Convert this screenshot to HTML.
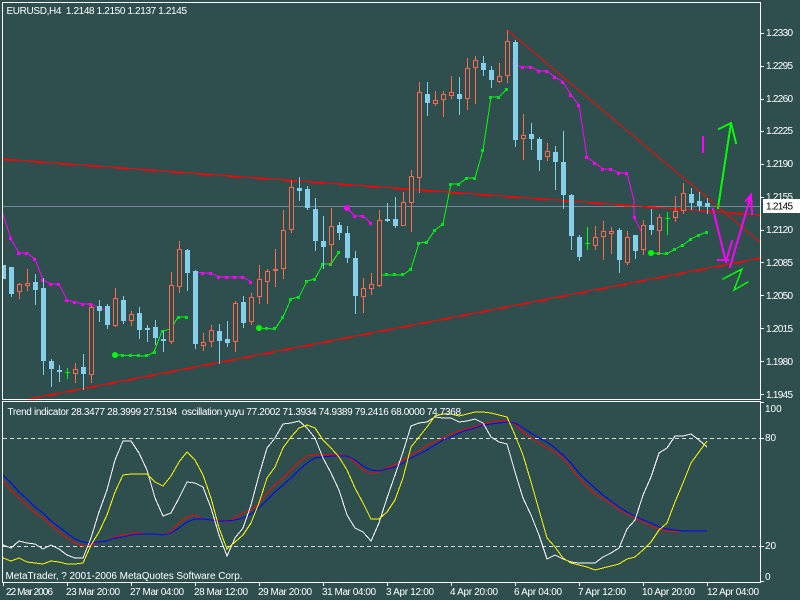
<!DOCTYPE html>
<html><head><meta charset="utf-8"><style>
html,body{margin:0;padding:0;background:#2f4f4f;width:800px;height:600px;overflow:hidden}
svg{display:block}
text{font-family:"Liberation Sans",sans-serif;font-size:10px;fill:#fff}
</style></head><body>
<svg width="800" height="600" viewBox="0 0 800 600" xmlns="http://www.w3.org/2000/svg">
<rect width="800" height="600" fill="#2f4f4f"/>
<g shape-rendering="crispEdges">
<path d="M3 206.5H760" stroke="#778899" fill="none"/>
<!-- indicator lines -->
<g fill="none" stroke="#ff00ff">
<polyline points="3,214 11,239 19,253 27,253 35,259 43,280 51,284 59,284 67,300 75,302 83,304 91,304 99,308 106,310"/>
<polyline points="195,272 203,273 211,273 219,277 227,277 235,277 243,277 251,282"/>
<polyline points="347,208 355,216 363,216 371,223"/>
<polyline points="512,64 523,67 531,67 539,71 547,71 555,77 563,82 571,95 579,105 587,157 595,163 603,169 611,169 619,173 627,173 630,185 634,200 634,217 641,231"/>
</g>
<path fill="#ff00ff" d="M9 237h3v3h-3zM17 252h3v3h-3zM25 252h3v3h-3zM33 258h3v3h-3zM41 279h3v3h-3zM49 283h3v3h-3zM57 283h3v3h-3zM65 299h3v3h-3zM73 301h3v3h-3zM81 303h3v3h-3zM89 303h3v3h-3z
M201 272h3v3h-3zM209 272h3v3h-3zM217 276h3v3h-3zM225 276h3v3h-3zM233 276h3v3h-3zM241 276h3v3h-3zM249 281h3v3h-3z
M353 215h3v3h-3zM361 215h3v3h-3zM369 222h3v3h-3z
M521 66h3v3h-3zM529 66h3v3h-3zM537 70h3v3h-3zM545 70h3v3h-3zM553 76h3v3h-3zM561 81h3v3h-3zM569 94h3v3h-3zM577 104h3v3h-3zM585 156h3v3h-3zM593 162h3v3h-3zM601 168h3v3h-3zM609 168h3v3h-3zM617 172h3v3h-3zM625 172h3v3h-3zM633 216h3v3h-3z"/>
<g fill="none" stroke="#00ff00">
<polyline points="115,355 147,356 154,352 162,331 171,329 178,317 186,317"/>
<polyline points="259,328 275,329 283,317 291,299 299,297 307,281 315,279 323,264 331,264 339,252"/>
<polyline points="379,275 403,275 411,269 419,243 427,242 435,230 443,224 451,184 459,184 467,178 475,178 483,150 491,97 499,97 507,89"/>
<polyline points="651,253 667,254 675,249 683,245 691,239 699,235 707,232"/>
</g>
<path fill="#00e020" d="M121 354h3v3h-3zM129 354h3v3h-3zM137 354h3v3h-3zM145 354h3v3h-3zM153 351h3v3h-3zM161 330h3v3h-3zM177 316h3v3h-3zM185 316h3v3h-3z
M265 327h3v3h-3zM273 327h3v3h-3zM281 316h3v3h-3zM289 298h3v3h-3zM297 296h3v3h-3zM305 280h3v3h-3zM313 278h3v3h-3zM321 263h3v3h-3zM329 263h3v3h-3zM337 251h3v3h-3z
M385 273h3v3h-3zM393 273h3v3h-3zM401 273h3v3h-3zM409 268h3v3h-3zM417 242h3v3h-3zM425 241h3v3h-3zM433 229h3v3h-3zM441 223h3v3h-3zM449 183h3v3h-3zM457 183h3v3h-3zM465 177h3v3h-3zM473 177h3v3h-3zM481 149h3v3h-3zM489 96h3v3h-3zM497 96h3v3h-3zM505 88h3v3h-3z
M657 252h3v3h-3zM665 252h3v3h-3zM673 248h3v3h-3zM681 244h3v3h-3zM689 238h3v3h-3zM697 234h3v3h-3zM705 231h3v3h-3z"/>
</g>
<circle cx="347" cy="208" r="3" fill="#ff00ff"/>
<circle cx="115" cy="355" r="3" fill="#00ff00"/>
<circle cx="259" cy="328" r="3" fill="#00ff00"/>
<circle cx="651" cy="253" r="3" fill="#00ff00"/>
<!-- trend lines -->
<g fill="none" stroke="#ff0000" shape-rendering="crispEdges">
<path d="M3 159L760 215"/>
<path d="M3 159.5L760 215.5" stroke-width="1.6" stroke-dasharray="14 14"/>
<path d="M28 399L760 258"/>
<path d="M28 399.5L760 258.500" stroke-width="1.6" stroke-dasharray="10 10"/>
<path d="M507 30L760 242"/>
</g>
<!-- candles -->
<g shape-rendering="crispEdges" fill="none">
<path stroke="#87ceeb" d="M3.5 265V279M11.5 267V297M35.5 274V305M43.5 278V375M51.5 359V387M59.5 365V382M83.5 354V390M99.5 300V322M107.5 304V329M123.5 296V324M139.5 307V339M147.5 325V342M155.5 320V345M163.5 331V352M187.5 249V291M195.5 270V349M219.5 324V364M227.5 321V347M243.5 296V328M299.5 177V201M307.5 186V210M315.5 198V251M323.5 216V269M339.5 222V240M347.5 226V263M355.5 251V314M387.5 203V222M395.5 197V228M427.5 82V116M459.5 77V115M483.5 56V76M491.5 66V88M515.5 40V147M531.5 123V150M539.5 137V171M555.5 146V190M563.5 131V209M571.5 194V250M579.5 235V261M619.5 228V273M635.5 235V259M651.5 209V235M691.5 188V210M699.5 192V211M707.5 198V214"/>
<path fill="#87ceeb" d="M3 265h3v14h-3zM9 267h5v27h-5zM33 282h5v8h-5zM41 288h5v73h-5zM49 361h5v8h-5zM57 370h5v2h-5zM81 367h5v7h-5zM97 306h5v5h-5zM105 306h5v19h-5zM121 300h5v21h-5zM137 313h5v17h-5zM145 328h5v2h-5zM153 327h5v11h-5zM161 339h5v2h-5zM185 250h5v23h-5zM193 271h5v73h-5zM217 331h5v10h-5zM225 339h5v4h-5zM241 302h5v21h-5zM297 188h5v3h-5zM305 189h5v19h-5zM313 209h5v32h-5zM321 241h5v6h-5zM337 225h5v8h-5zM345 233h5v25h-5zM353 258h5v38h-5zM385 219h5v2h-5zM393 219h5v7h-5zM425 94h5v9h-5zM457 94h5v5h-5zM481 63h5v7h-5zM489 70h5v10h-5zM513 42h5v98h-5zM529 134h5v5h-5zM537 139h5v21h-5zM553 152h5v10h-5zM561 162h5v33h-5zM569 195h5v41h-5zM577 237h5v20h-5zM617 230h5v30h-5zM633 235h5v16h-5zM649 225h5v5h-5zM689 194h5v9h-5zM697 201h5v5h-5zM705 203h5v4h-5z"/>
<path stroke="#ff6a50" d="M19.5 283V299M27.5 269V291M75.5 363V383M91.5 305V383M115.5 288V327M131.5 311V326M171.5 272V344M179.5 241V293M203.5 333V351M211.5 325V347M235.5 301V352M251.5 293V325M259.5 265V304M267.5 269V304M275.5 249V287M283.5 210V279M291.5 180V233M331.5 208V266M363.5 278V313M371.5 273V295M379.5 210V287M403.5 192V226M411.5 170V232M419.5 82V193M435.5 91V106M443.5 91V117M451.5 76V99M467.5 58V110M475.5 56V104M499.5 63V83M507.5 30V83M523.5 114V160M547.5 143V161M595.5 226V250M603.5 221V260M611.5 227V254M627.5 231V265M643.5 220V255M659.5 214V255M675.5 196V222M683.5 183V214"/>
<path stroke="#ff6a50" fill="#2f4f4f" d="M17.5 284.5h4v7h-4zM25.5 283.5h4v2h-4zM73.5 369.5h4v4h-4zM89.5 307.5h4v67h-4zM113.5 298.5h4v27h-4zM129.5 314.5h4v6h-4zM169.5 285.5h4v56h-4zM177.5 249.5h4v37h-4zM201.5 342.5h4v3h-4zM209.5 330.5h4v11h-4zM233.5 303.5h4v38h-4zM249.5 297.5h4v24h-4zM257.5 279.5h4v17h-4zM265.5 271.5h4v10h-4zM273.5 269.5h4v1h-4zM281.5 230.5h4v38h-4zM289.5 187.5h4v42h-4zM329.5 226.5h4v18h-4zM361.5 288.5h4v8h-4zM369.5 284.5h4v4h-4zM377.5 220.5h4v65h-4zM401.5 202.5h4v23h-4zM409.5 176.5h4v26h-4zM417.5 92.5h4v85h-4zM433.5 100.5h4v3h-4zM441.5 94.5h4v5h-4zM449.5 92.5h4v3h-4zM465.5 68.5h4v30h-4zM473.5 60.5h4v7h-4zM497.5 76.5h4v5h-4zM505.5 41.5h4v34h-4zM521.5 135.5h4v3h-4zM545.5 151.5h4v5h-4zM593.5 237.5h4v8h-4zM601.5 231.5h4v5h-4zM609.5 231.5h4v2h-4zM625.5 237.5h4v25h-4zM641.5 225.5h4v24h-4zM657.5 217.5h4v13h-4zM673.5 211.5h4v6h-4zM681.5 193.5h4v17h-4z"/>
<path stroke="#00ff00" d="M67.5 368V379M65 372.5H70M587.5 227V250M585 243.5H590M667.5 212V235M665 218.5H670"/>
</g>
<!-- hand-drawn -->
<g fill="none" stroke-linecap="square" stroke-linejoin="miter" shape-rendering="crispEdges">
<path d="M703 137V152" stroke="#ff00ff" stroke-width="2"/>
<g stroke="#00ff00" stroke-width="2">
<path d="M718 208L731 123M719 129L731 123L736 143"/>
</g>
<g stroke="#00ff00" stroke-width="1.5">
<path d="M723 279L742 269L734 290L748 282"/>
</g>
<g stroke="#ff00ff" stroke-width="2">
<path d="M713 209L726 262M718 260H728M726 262L732 241"/>
<path d="M730 267L751 195M746 201L751 195L752 214"/>
</g>
</g>
<!-- oscillator -->
<g fill="none" stroke-width="1" shape-rendering="crispEdges">
<path d="M3 438.5H760M3 546.5H760" stroke="#d8d8d8" stroke-dasharray="4 3"/>
<polyline stroke="#ff0000" points="3,481 11,490 19,498 27,505 35,513 43,518 51,525 59,532 67,538 75,543 83,546 91,545 99,542 107,541 115,537 123,535 131,534 139,533 147,534 155,534 163,535 171,532 179,523 187,517 195,515 203,519 211,520 219,520 227,522 235,518 243,513 251,510 259,503 267,493 275,485 283,478 291,470 299,462 307,456 315,455 323,455 331,455 339,455 347,456 355,462 363,470 371,474 379,472 387,468 395,465 403,460 411,455 419,451 427,445 435,442 443,438 451,434 459,431 467,429 475,427 483,424 491,422 499,421 507,421 515,424 523,432 531,438 539,443 547,448 555,452 563,458 571,468 579,478 587,487 595,494 603,499 611,504 619,510 627,514 635,518 643,522 651,526 659,529 667,531 675,532 679,532"/>
<polyline stroke="#0000ff" points="3,475 11,483 19,492 27,499 35,507 43,513 51,521 59,527 67,533 75,539 83,542 91,543 99,542 107,541 115,538 123,537 131,535 139,534 147,534 155,534 163,535 171,533 179,528 187,522 195,519 203,519 211,520 219,521 227,521 235,520 243,518 251,514 259,508 267,500 275,492 283,485 291,478 299,470 307,463 315,458 323,457 331,456 339,456 347,456 355,460 363,466 371,470 379,471 387,469 395,467 403,463 411,458 419,454 427,450 435,445 443,440 451,437 459,433 467,430 475,428 483,425 491,424 499,423 507,422 515,423 523,428 531,433 539,438 547,442 555,448 563,455 571,463 579,473 587,481 595,488 603,495 611,501 619,507 627,512 635,516 643,520 651,523 659,527 667,529 675,530 683,531 707,531"/>
<polyline stroke="#ffffff" points="3,545 11,548 19,541 27,543 35,544 43,549 51,545 59,549 67,555 75,558 83,558 91,538 99,512 107,490 115,460 123,441 131,441 139,453 147,470 155,498 163,516 171,513 179,498 187,482 195,483 203,487 211,508 219,535 227,556 235,538 243,528 251,505 259,475 267,448 275,438 283,424 291,423 299,421 307,428 315,438 323,458 331,473 339,490 347,515 355,528 363,532 371,541 379,523 387,498 395,475 403,452 411,426 419,423 427,422 435,417 443,418 451,418 459,422 467,421 475,419 483,423 491,437 499,442 507,444 515,472 523,498 531,515 539,535 547,559 555,555 563,559 571,562 579,563 587,563 595,563 603,557 611,553 619,548 627,529 635,520 643,495 651,477 659,453 667,448 675,436 683,436 691,434 699,440 707,447"/>
<polyline stroke="#ffff00" points="3,558 11,561 19,558 27,562 35,563 43,564 51,561 59,562 67,564 75,564 83,563 91,545 99,532 107,515 115,492 123,475 131,474 139,474 147,474 155,482 163,486 171,476 179,462 187,452 195,460 203,475 211,498 219,528 227,549 235,542 243,535 251,523 259,503 267,478 275,467 283,448 291,437 299,428 307,425 315,428 323,440 331,448 339,457 347,470 355,488 363,503 371,519 379,519 387,512 395,500 403,478 411,447 419,437 427,427 435,416 443,414 451,414 459,416 467,414 475,412 483,412 491,413 499,415 507,417 515,435 523,455 531,482 539,510 547,538 555,547 563,558 571,563 579,565 587,567 595,570 603,568 611,566 619,564 627,559 635,557 643,550 651,542 659,530 667,523 675,502 683,483 691,463 699,452 707,441"/>
</g>
<!-- frames and ticks -->
<g shape-rendering="crispEdges" fill="none" stroke="#fff">
<path d="M2.5 2.5H760.5V399.5H2.5Z"/>
<path d="M2.5 401.5H760.5V582.5H2.5Z"/>
<path d="M761 33.5h3M761 66.5h3M761 99.5h3M761 131.5h3M761 164.5h3M761 197.5h3M761 230.5h3M761 262.5h3M761 295.5h3M761 328.5h3M761 361.5h3M761 394.5h3"/>
<path d="M761 402.5h3M761 438.5h3M761 546.5h3M761 581.5h3"/>
<path d="M3.5 583v3M67.5 583v3M131.5 583v3M195.5 583v3M259.5 583v3M323.5 583v3M387.5 583v3M451.5 583v3M515.5 583v3M579.5 583v3M643.5 583v3M707.5 583v3"/>
</g>
<rect x="763" y="199" width="37" height="14" fill="#fff"/>
<!-- text -->
<text x="6.500" y="14" textLength="180.500">EURUSD,H4&#160;&#160;1.2148 1.2150 1.2137 1.2145</text>
<text x="7.500" y="415" textLength="453.500">Trend indicator 28.3477 28.3999 27.5194&#160;&#160;oscillation yuyu 77.2002 71.3934 74.9389 79.2416 68.0000 74.7368</text>
<text x="5.500" y="579" textLength="237">MetaTrader, ? 2001-2006 MetaQuotes Software Corp.</text>
<text x="766" y="36" textLength="27">1.2330</text>
<text x="766" y="69" textLength="27">1.2295</text>
<text x="766" y="102" textLength="27">1.2260</text>
<text x="766" y="134" textLength="27">1.2225</text>
<text x="766" y="167" textLength="27">1.2190</text>
<text x="766" y="200" textLength="27">1.2155</text>
<text x="766" y="209.500" textLength="27" style="fill:#000">1.2145</text>
<text x="766" y="233" textLength="27">1.2120</text>
<text x="766" y="266" textLength="27">1.2085</text>
<text x="766" y="299" textLength="27">1.2050</text>
<text x="766" y="332" textLength="27">1.2015</text>
<text x="766" y="365" textLength="27">1.1980</text>
<text x="766" y="398" textLength="27">1.1945</text>
<text x="765" y="412">100</text>
<text x="765" y="441">80</text>
<text x="765" y="549">20</text>
<text x="765" y="580">0</text>
<text x="6" y="595" textLength="47">22 Mar 2006</text>
<text x="66" y="595" textLength="54">23 Mar 20:00</text>
<text x="130" y="595" textLength="54">27 Mar 04:00</text>
<text x="194" y="595" textLength="54">28 Mar 12:00</text>
<text x="258" y="595" textLength="54">29 Mar 20:00</text>
<text x="322" y="595" textLength="54">31 Mar 04:00</text>
<text x="386" y="595" textLength="48">3 Apr 12:00</text>
<text x="450" y="595" textLength="48">4 Apr 20:00</text>
<text x="514" y="595" textLength="48">6 Apr 04:00</text>
<text x="578" y="595" textLength="48">7 Apr 12:00</text>
<text x="642" y="595" textLength="53">10 Apr 20:00</text>
<text x="707" y="595" textLength="52">12 Apr 04:00</text>
</svg>
</body></html>
